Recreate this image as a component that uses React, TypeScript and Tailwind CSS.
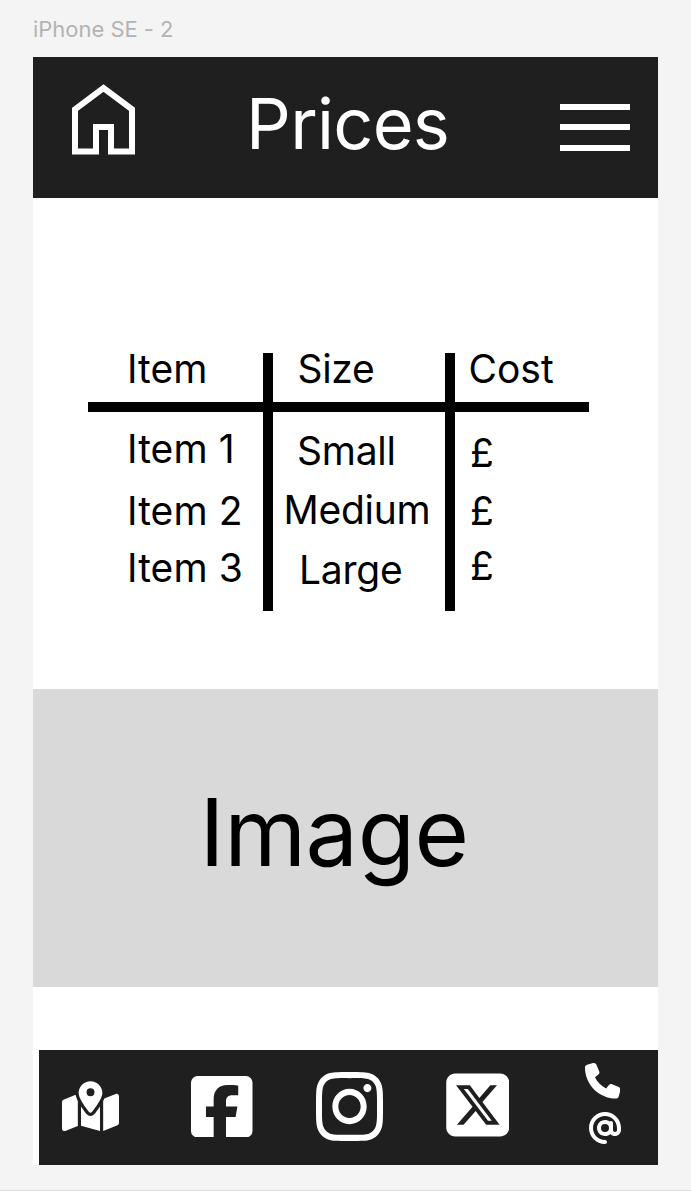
import React from "react";
import { FaMapLocationDot, FaSquareXTwitter, FaPhone, FaAt, FaInstagram } from "react-icons/fa6";

function HomeIcon() {
  return (
    <svg className="h-[71px] w-[63px]" viewBox="0 0 63 71" fill="none" stroke="white" strokeWidth="6">
      <path d="M3 25.3 31.5 4 60 25.3V67.5H39V43H24V67.5H3Z" />
    </svg>
  );
}

function FacebookIcon() {
  return (
    <svg className="h-[61.5px] w-[61.5px]" viewBox="0 0 448 448" fill="white">
      <path d="M400 0H48A48 48 0 0 0 0 48v352a48 48 0 0 0 48 48h117V299h-56v-76h56v-54c0-68 40-104 99-104 28 0 80 4 80 4v71h-39c-40 0-50 19-50 46v37h83l-13 76h-70v149h145a48 48 0 0 0 48-48V48a48 48 0 0 0-48-48z" />
    </svg>
  );
}

export default function App() {
  return (
    <div className="flex h-[1191px] w-[691px] flex-col border-b border-[#dddddd] bg-[#f4f4f4] pl-[33px] font-['Inter',sans-serif] text-black">
      <div className="h-[57px] pt-[15px] text-[22px] leading-[28px] tracking-[-0.03px] text-[#b3b3b3]">iPhone SE - 2</div>
      <main className="flex h-[1108px] w-[624.5px] flex-col bg-white">
        <header className="flex h-[141.3px] shrink-0 bg-[#1f1f1f]">
          <div className="w-[213px] pt-[27px] pl-[39px]">
            <HomeIcon />
          </div>
          <h1 className="w-[314px] pt-[27px] text-[70.2px] leading-[80px] tracking-[-0.7px] text-white">Prices</h1>
          <div className="flex w-[70px] flex-col gap-[14.6px] pt-[46.7px]">
            <div className="h-[6px] bg-white" />
            <div className="h-[6px] bg-white" />
            <div className="h-[6px] bg-white" />
          </div>
        </header>

        <section className="flex h-[490.7px] shrink-0 flex-col pt-[155px] pl-[55px] text-[39px] leading-[32px]">
          <div className="flex h-[49px] w-[501px]">
            <div className="w-[175px] pl-[39px]">Item</div>
            <div className="w-[182px] border-l-10 border-black pl-[24.5px] tracking-[-0.3px]">Size</div>
            <div className="w-[144px] border-l-10 border-black pl-[13.5px]">Cost</div>
          </div>
          <div className="h-[10px] w-[501px] shrink-0 bg-black" />
          <div className="flex h-[199px] w-[501px]">
            <div className="w-[175px] pt-[21px] pl-[39px] tracking-[0.1px]">
              <div>Item 1</div>
              <div className="mt-[30px]">Item 2</div>
              <div className="mt-[25px]">Item 3</div>
            </div>
            <div className="w-[182px] border-l-10 border-black pt-[23px] tracking-[-0.25px]">
              <div className="pl-[24px]">Small</div>
              <div className="mt-[27px] pl-[10.5px]">Medium</div>
              <div className="mt-[28px] pl-[26px]">Large</div>
            </div>
            <div className="w-[144px] border-l-10 border-black pt-[25px] pl-[15px]">
              <div>£</div>
              <div className="mt-[26px]">£</div>
              <div className="mt-[23px]">£</div>
            </div>
          </div>
        </section>

        <section className="h-[298.5px] shrink-0 bg-[#d9d9d9] pt-[87px] pl-[166.5px] text-[93.6px] leading-[112px] tracking-[-0.5px]">
          Image
        </section>

        <footer className="mt-[62.5px] ml-[6px] flex h-[115px] shrink-0 bg-[#1f1f1f] text-white">
          <div className="w-[152px] pt-[31px] pl-[23px]">
            <FaMapLocationDot className="h-[51px] w-[57px]" />
          </div>
          <div className="w-[125px] pt-[26px]">
            <FacebookIcon />
          </div>
          <div className="w-[129.5px] pt-[17px]">
            <FaInstagram className="h-[79px] w-[67px]" preserveAspectRatio="none" />
          </div>
          <div className="w-[139px] pt-[19px]">
            <FaSquareXTwitter className="h-[72px] w-[63.5px]" />
          </div>
          <div className="flex flex-col pt-[13.5px]">
            <FaPhone className="h-[35.5px] w-[35.5px]" />
            <FaAt className="mt-[13px] ml-[4px] h-[32px] w-[32px]" />
          </div>
        </footer>
      </main>
    </div>
  );
}
